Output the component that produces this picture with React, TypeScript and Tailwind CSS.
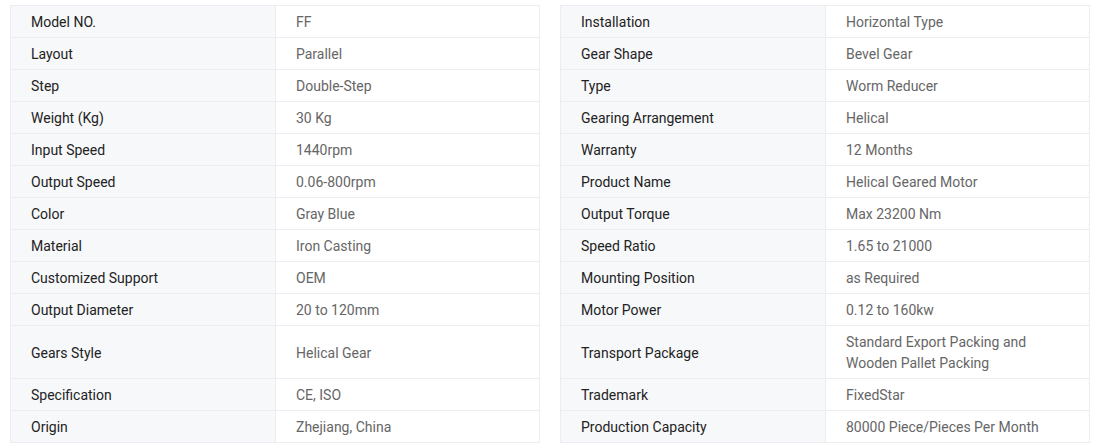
const left: [string, string][] = [
  ['Model NO.', 'FF'],
  ['Layout', 'Parallel'],
  ['Step', 'Double-Step'],
  ['Weight (Kg)', '30 Kg'],
  ['Input Speed', '1440rpm'],
  ['Output Speed', '0.06-800rpm'],
  ['Color', 'Gray Blue'],
  ['Material', 'Iron Casting'],
  ['Customized Support', 'OEM'],
  ['Output Diameter', '20 to 120mm'],
  ['Gears Style', 'Helical Gear'],
  ['Specification', 'CE, ISO'],
  ['Origin', 'Zhejiang, China'],
];

const right: [string, string][] = [
  ['Installation', 'Horizontal Type'],
  ['Gear Shape', 'Bevel Gear'],
  ['Type', 'Worm Reducer'],
  ['Gearing Arrangement', 'Helical'],
  ['Warranty', '12 Months'],
  ['Product Name', 'Helical Geared Motor'],
  ['Output Torque', 'Max 23200 Nm'],
  ['Speed Ratio', '1.65 to 21000'],
  ['Mounting Position', 'as Required'],
  ['Motor Power', '0.12 to 160kw'],
  ['Transport Package', 'Standard Export Packing and Wooden Pallet Packing'],
  ['Trademark', 'FixedStar'],
  ['Production Capacity', '80000 Piece/Pieces Per Month'],
];

function Cells({ pair, first }: { pair: [string, string]; first: boolean }) {
  const top = first ? 'border-t' : '';
  return (
    <>
      <div
        className={`flex items-center border-l border-b border-[#ebedf0] bg-[#f7f8fa] pl-[20px] pr-[16px] pt-[6px] pb-[4px] text-[14px] leading-[21px] text-[#222] ${top}`}
      >
        {pair[0]}
      </div>
      <div
        className={`flex items-center border-l border-r border-b border-[#ebedf0] bg-white pl-[20px] pr-[16px] pt-[6px] pb-[4px] text-[14px] leading-[21px] text-[#666] ${top}`}
      >
        {pair[1]}
      </div>
    </>
  );
}

export default function App() {
  return (
    <div className="min-h-[446px] bg-white pt-[5px] pl-[10px] font-['Roboto',sans-serif]">
      <div className="grid grid-cols-[265px_265px_20px_265px_265px]">
        {left.map((pair, i) => (
          <div key={pair[0]} className="contents">
            <Cells pair={pair} first={i === 0} />
            <div />
            <Cells pair={right[i]} first={i === 0} />
          </div>
        ))}
      </div>
    </div>
  );
}
